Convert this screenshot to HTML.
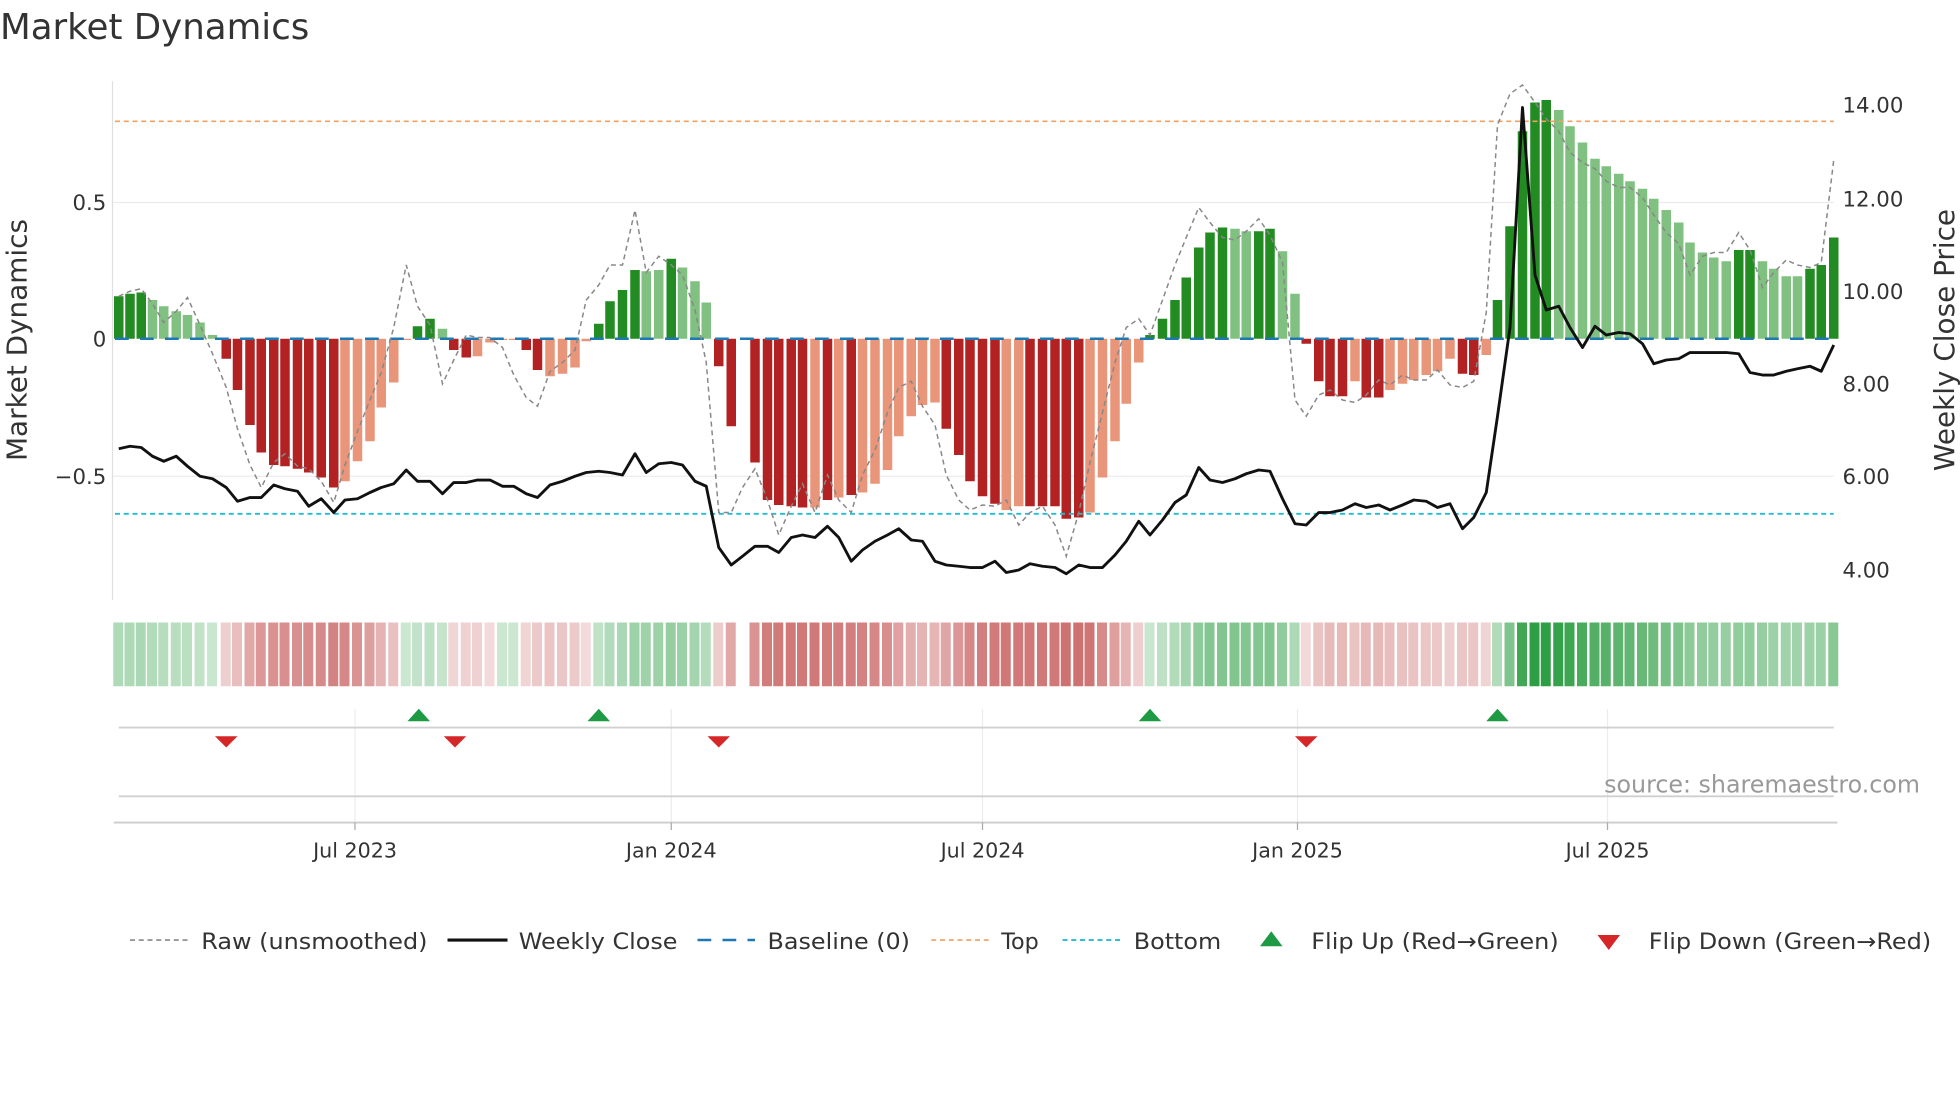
<!DOCTYPE html>
<html><head><meta charset="utf-8"><style>
html,body{margin:0;padding:0;background:#fff;width:1960px;height:1102px;overflow:hidden}
svg{display:block;font-family:"DejaVu Sans","Liberation Sans",sans-serif}
</style></head><body>
<svg id="s" width="1960" height="1102" viewBox="0 0 1568 881.6" xmlns="http://www.w3.org/2000/svg">
<rect width="1568" height="882" fill="#fff"/>
<text x="0" y="31" font-size="28.5" fill="#333">Market Dynamics</text>
<g stroke="#ececec" stroke-width="1">
<line x1="90" y1="162" x2="1467" y2="162"/><line x1="90" y1="381" x2="1467" y2="381"/>
</g>
<line x1="90" y1="65" x2="90" y2="480" stroke="#e0e0e0"/>
<g id="bars"></g>
<line x1="92" y1="97" x2="1467" y2="97" stroke="#f0a060" stroke-width="1.3" stroke-dasharray="4,3"/>
<line x1="92" y1="411" x2="1467" y2="411" stroke="#22bcd4" stroke-width="1.5" stroke-dasharray="4,3"/>
<line x1="92" y1="271" x2="1467" y2="271" stroke="#1f77b4" stroke-width="2" stroke-dasharray="11,9"/>
<polyline id="raw" fill="none" stroke="#888" stroke-width="1.2" stroke-dasharray="4,3"/>
<polyline id="px" fill="none" stroke="#111" stroke-width="2.3" stroke-linejoin="round"/>
<g font-size="17" fill="#333">
<text x="85" y="168" text-anchor="end">0.5</text>
<text x="85" y="277" text-anchor="end">0</text>
<text x="85" y="387" text-anchor="end">−0.5</text>
<text x="1474" y="90">14.00</text><text x="1474" y="165">12.00</text><text x="1474" y="239">10.00</text>
<text x="1474" y="313">8.00</text><text x="1474" y="387">6.00</text><text x="1474" y="462">4.00</text>
<text transform="translate(21,272) rotate(-90)" text-anchor="middle" font-size="22.3">Market Dynamics</text>
<text transform="translate(1563,272) rotate(-90)" text-anchor="middle" font-size="22.3">Weekly Close Price</text>
</g>
<g id="strip"></g>
<g stroke="#ececec"><line x1="284" y1="567" x2="284" y2="658"/><line x1="537" y1="567" x2="537" y2="658"/><line x1="786" y1="567" x2="786" y2="658"/><line x1="1038" y1="567" x2="1038" y2="658"/><line x1="1286" y1="567" x2="1286" y2="658"/></g>
<line x1="95" y1="582" x2="1467" y2="582" stroke="#d0d0d0" stroke-width="1.5"/>
<line x1="95" y1="637" x2="1467" y2="637" stroke="#d0d0d0" stroke-width="1.5"/>
<line x1="91" y1="658" x2="1470" y2="658" stroke="#ccc" stroke-width="1.5"/>
<g stroke="#aaa"><line x1="284" y1="658" x2="284" y2="664"/><line x1="537" y1="658" x2="537" y2="664"/><line x1="786" y1="658" x2="786" y2="664"/><line x1="1038" y1="658" x2="1038" y2="664"/><line x1="1286" y1="658" x2="1286" y2="664"/></g>
<g fill="#1e9a45">
<polygon points="326,577 335,567 344,577"/><polygon points="470,577 479,567 488,577"/><polygon points="911,577 920,567 929,577"/><polygon points="1189,577 1198,567 1207,577"/>
</g>
<g fill="#d62728">
<polygon points="172,589 190,589 181,598"/><polygon points="355,589 373,589 364,598"/><polygon points="566,589 584,589 575,598"/><polygon points="1036,589 1054,589 1045,598"/>
</g>
<text x="1536" y="634" text-anchor="end" font-size="19" fill="#999">source: sharemaestro.com</text>
<g font-size="16.5" fill="#333" text-anchor="middle">
<text x="284" y="686">Jul 2023</text><text x="537" y="686">Jan 2024</text><text x="786" y="686">Jul 2024</text><text x="1038" y="686">Jan 2025</text><text x="1286" y="686">Jul 2025</text>
</g>
<g font-size="17.8" fill="#333">
<line x1="104" y1="752" x2="150" y2="752" stroke="#888" stroke-width="1.3" stroke-dasharray="4,3"/>
<text x="161" y="759" textLength="181" lengthAdjust="spacingAndGlyphs">Raw (unsmoothed)</text>
<line x1="358" y1="752" x2="406" y2="752" stroke="#111" stroke-width="2.5"/>
<text x="415" y="759" textLength="127" lengthAdjust="spacingAndGlyphs">Weekly Close</text>
<line x1="558" y1="752" x2="604" y2="752" stroke="#1f77b4" stroke-width="2" stroke-dasharray="11,9"/>
<text x="614" y="759" textLength="114" lengthAdjust="spacingAndGlyphs">Baseline (0)</text>
<line x1="745" y1="752" x2="791" y2="752" stroke="#f0a060" stroke-width="1.3" stroke-dasharray="4,3"/>
<text x="801" y="759">Top</text>
<line x1="850" y1="752" x2="896" y2="752" stroke="#22bcd4" stroke-width="1.5" stroke-dasharray="4,3"/>
<text x="907" y="759" textLength="70" lengthAdjust="spacingAndGlyphs">Bottom</text>
<polygon points="1008,757 1017,745 1026,757" fill="#1e9a45"/>
<text x="1049" y="759" textLength="198" lengthAdjust="spacingAndGlyphs">Flip Up (Red→Green)</text>
<polygon points="1278,748 1296,748 1287,760" fill="#d62728"/>
<text x="1319" y="759" textLength="226" lengthAdjust="spacingAndGlyphs">Flip Down (Green→Red)</text>
</g>
</svg>
<script>
var B=[[95,237,'G'],[104,235,'G'],[113,234,'G'],[122,240,'g'],[131,245,'g'],[141,249,'g'],[150,252,'g'],[160,258,'g'],[170,268,'g'],
[181,287,'R'],[190,312,'R'],[200,340,'R'],[209,362,'R'],[219,372,'R'],[228,373,'R'],[238,375,'R'],[247,378,'R'],[257,382,'R'],[267,390,'R'],
[276,385,'r'],[286,369,'r'],[296,353,'r'],[305,326,'r'],[315,306,'r'],[325,271,'r'],[334,261,'G'],[344,255,'G'],[354,263,'g'],
[363,280,'R'],[373,286,'R'],[382,285,'r'],[392,274,'r'],[402,271,'r'],[411,271,'r'],[421,280,'R'],[430,296,'R'],[440,301,'r'],[450,299,'r'],[460,294,'r'],[469,273,'r'],
[479,259,'G'],[488,241,'G'],[498,232,'G'],[508,216,'G'],[517,217,'g'],[527,216,'g'],[537,207,'G'],[546,214,'g'],[556,225,'g'],[565,242,'g'],
[575,293,'R'],[585,341,'R'],[604,370,'R'],[614,400,'R'],[623,404,'R'],[633,405,'R'],[642,406,'R'],[652,406,'r'],[662,400,'R'],[671,398,'r'],[681,396,'R'],
[690,394,'r'],[700,387,'r'],[710,376,'r'],[719,349,'r'],[729,333,'r'],[738,324,'r'],[748,322,'r'],
[757,343,'R'],[767,364,'R'],[776,385,'R'],[786,397,'R'],[796,403,'R'],[805,408,'r'],[815,405,'r'],[824,405,'R'],[834,405,'R'],[844,405,'R'],[853,415,'R'],[863,414,'R'],
[872,410,'r'],[882,382,'r'],[892,353,'r'],[901,323,'r'],[911,290,'r'],
[920,268,'G'],[930,255,'G'],[940,240,'G'],[949,222,'G'],[959,198,'G'],[968,186,'G'],[978,182,'G'],[988,183,'g'],[997,185,'g'],[1007,185,'G'],[1016,183,'G'],[1026,201,'g'],[1036,235,'g'],
[1045,275,'R'],[1055,305,'R'],[1064,317,'R'],[1074,317,'R'],[1084,305,'r'],[1093,318,'R'],[1103,318,'R'],[1112,312,'r'],[1122,307,'r'],[1131,304,'r'],[1141,300,'r'],[1150,297,'r'],[1160,287,'r'],[1170,299,'R'],[1179,300,'R'],[1189,284,'r'],
[1198,240,'G'],[1208,181,'G'],[1218,105,'G'],[1228,82,'G'],[1237,80,'G'],[1247,88,'g'],[1256,101,'g'],[1266,114,'g'],[1276,127,'g'],[1285,133,'g'],[1295,139,'g'],[1304,145,'g'],[1314,151,'g'],[1323,159,'g'],[1333,168,'g'],[1343,178,'g'],[1352,194,'g'],[1362,202,'g'],[1371,206,'g'],[1381,209,'g'],[1391,200,'G'],[1400,200,'G'],[1410,209,'g'],[1419,215,'g'],[1429,221,'g'],[1438,221,'g'],[1448,215,'G'],[1457,212,'G'],[1467,190,'G']];
var C={G:'#228b22',g:'#80c080',R:'#b22222',r:'#e8957a'};
var h='',st='',w=7.6;
B.forEach(function(b){var x=b[0]-w/2,y=b[1],top=Math.min(y,271),hh=Math.abs(y-271);
 h+='<rect x="'+x+'" y="'+top+'" width="'+w+'" height="'+Math.max(hh,1)+'" fill="'+C[b[2]]+'"/>';
 var v=(271-y)/218,pos=v>=0;var a=pos?0.25+0.75*Math.min(v/0.87,1):0.2+0.6*Math.min(-v/0.66,1);
 st+='<rect x="'+(b[0]-4.4)+'" y="498" width="8" height="51" fill="'+(pos?'#2e9e44':'#c24e4e')+'" fill-opacity="'+a.toFixed(2)+'"/>';});
document.getElementById('bars').innerHTML=h;document.getElementById('strip').innerHTML=st;
var P="95,359 104,357 113,358 122,365 131,369 141,365 150,373 160,381 170,383 181,390 190,401 200,398 209,398 219,388 228,391 238,393 247,405 257,399 267,410 276,400 286,399 296,394 305,390 315,387 325,376 334,385 344,385 354,395 363,386 373,386 382,384 392,384 402,389 411,389 421,395 430,398 440,388 450,385 460,381 469,378 479,377 488,378 498,380 508,363 517,378 527,371 537,370 546,372 556,385 565,389 575,438 585,452 594,445 604,437 614,437 623,442 633,430 642,428 652,430 662,421 671,430 681,449 690,440 700,433 710,428 719,423 729,432 738,433 748,449 757,452 767,453 776,454 786,454 796,449 805,458 815,456 824,451 834,453 844,454 853,459 863,452 872,454 882,454 892,444 901,433 911,417 920,428 930,416 940,402 949,396 959,374 968,384 978,386 988,383 997,379 1007,376 1016,377 1026,399 1036,419 1045,420 1055,410 1064,410 1074,408 1084,403 1093,406 1103,404 1112,408 1122,404 1131,400 1141,401 1150,406 1160,403 1170,423 1179,414 1189,394 1198,333 1208,262 1218,86 1228,220 1237,248 1247,245 1256,262 1266,278 1276,261 1285,268 1295,266 1304,267 1314,275 1323,291 1333,288 1343,287 1352,282 1362,282 1371,282 1381,282 1391,283 1400,298 1410,300 1419,300 1429,297 1438,295 1448,293 1457,297 1467,276";
var R="95,237 104,233 113,231 122,243 131,258 141,249 150,238 160,260 170,283 181,310 190,343 200,372 209,390 219,370 228,363 238,373 247,375 257,385 267,402 276,372 286,345 296,320 305,298 315,262 325,212 334,245 344,260 354,307 363,288 373,268 382,270 392,270 402,278 411,300 421,318 430,325 440,297 450,290 460,280 469,240 479,228 488,212 498,212 508,168 517,218 527,205 537,212 546,220 556,248 565,290 575,410 585,410 594,390 604,375 614,400 623,428 633,405 642,387 652,410 662,380 671,400 681,410 690,380 700,360 710,330 719,310 729,305 738,325 748,340 757,380 767,400 776,408 786,404 796,405 805,400 815,420 824,410 834,405 844,420 853,445 863,410 872,370 882,330 892,290 901,262 911,255 920,268 930,240 940,212 949,190 959,166 968,178 978,190 988,192 997,185 1007,175 1016,188 1026,210 1036,320 1045,333 1055,316 1064,312 1074,320 1084,322 1093,316 1103,304 1112,308 1122,300 1131,304 1141,304 1150,296 1160,308 1170,310 1179,305 1189,250 1198,100 1208,75 1218,68 1228,82 1237,95 1247,105 1256,122 1266,130 1276,135 1285,145 1295,150 1304,150 1314,158 1323,172 1333,186 1343,195 1352,220 1362,205 1371,202 1381,202 1391,186 1400,200 1410,230 1419,218 1429,208 1438,212 1448,214 1457,210 1467,128";
document.getElementById('px').setAttribute('points',P);document.getElementById('raw').setAttribute('points',R);
</script>
</body></html>
